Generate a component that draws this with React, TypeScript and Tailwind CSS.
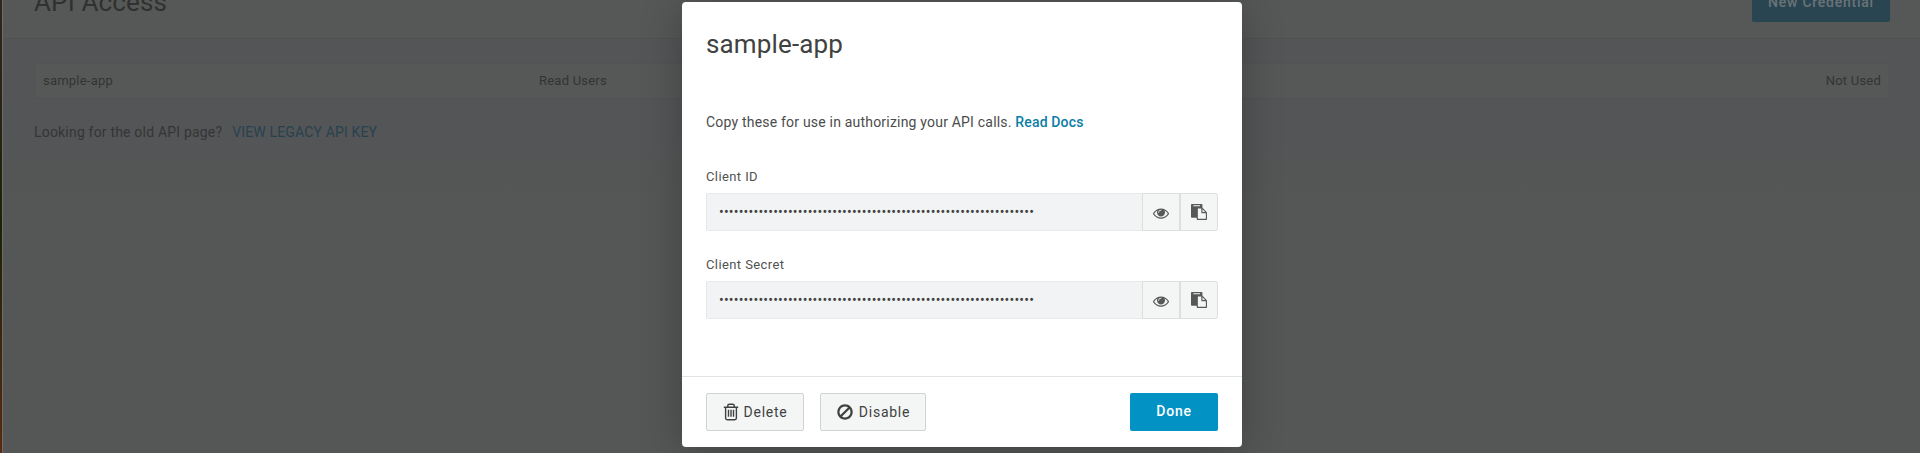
import React from "react";

function Icon({ path, className }: { path: string; className: string }) {
  return (
    <svg viewBox="0 0 1792 1792" fill="currentColor" className={className}>
      <path d={path} />
    </svg>
  );
}

const EYE =
  "M1664 960q-152-236-381-353 61 104 61 225 0 185-131.5 316.5t-316.5 131.5-316.5-131.5-131.5-316.5q0-121 61-225-229 117-381 353 133 205 333.5 326.5t434.5 121.5 434.5-121.5 333.5-326.5zm-720-384q0-20-14-34t-34-14q-125 0-214.5 89.5t-89.5 214.5q0 20 14 34t34 14 34-14 14-34q0-86 61-147t147-61q20 0 34-14t14-34zm848 384q0 34-20 69-140 230-376.5 368.5t-499.5 138.5-499.5-139-376.5-368q-20-35-20-69t20-69q140-229 376.5-368t499.5-139 499.5 139 376.5 368q20 35 20 69z";
const PASTE =
  "M768 1664h896v-640h-416q-40 0-68-28t-28-68v-416h-384v1152zm256-1440v-64q0-13-9.5-22.5t-22.5-9.5h-704q-13 0-22.5 9.5t-9.5 22.5v64q0 13 9.5 22.5t22.5 9.5h704q13 0 22.5-9.5t9.5-22.5zm256 672h299l-299-299v299zm512 128v672q0 40-28 68t-68 28h-960q-40 0-68-28t-28-68v-160h-544q-40 0-68-28t-28-68v-1344q0-40 28-68t68-28h1088q40 0 68 28t28 68v328q21 13 36 28l408 408q28 28 48 76t20 88z";
const BAN =
  "M1440 893q0-161-87-295l-754 753q137 89 297 89 111 0 211.5-43.5t173.5-116.5 116-174.5 43-212.5zm-999 299l755-754q-135-91-300-91-148 0-273 73t-198 199-73 274q0 162 89 299zm1223-299q0 157-61 300t-163.5 246-245 164-298.5 61-298.5-61-245-164-163.5-246-61-300 61-299.5 163.5-245.5 245-164 298.5-61 298.5 61 245 164 163.5 245.5 61 299.5z";

function Trash() {
  return (
    <svg viewBox="0 0 16 18" className="h-[18px] w-4" fill="none" stroke="currentColor" strokeWidth="1.4">
      <path d="M0.8 4.2h14.4M4.8 4V2.6q0-1.4 1.4-1.4h3.6q1.4 0 1.4 1.4V4M2.6 4.2v10.9q0 1.6 1.6 1.6h7.6q1.6 0 1.6-1.6V4.2M5.5 6.8v7M8 6.8v7M10.5 6.8v7" />
    </svg>
  );
}

const MASK = "•".repeat(64);

function SecretField({ label }: { label: string }) {
  return (
    <div>
      <div className="mb-[7px] text-[13px] leading-[18px] tracking-[0.4px] text-[#505251]">{label}</div>
      <div className="flex h-[38px]">
        <div className="flex flex-1 items-center overflow-hidden rounded-l-[2px] border border-r-0 border-[#e8eaea] bg-[#f2f3f5] pl-3 text-sm leading-4 tracking-[0.2px] text-[#404241]">
          {MASK}
        </div>
        <button className="flex w-[38px] items-center justify-center border border-[#dcdfde] bg-[#f4f6f5] pt-0.5 text-[#555857]">
          <Icon path={EYE} className="size-4" />
        </button>
        <button className="flex w-[38px] items-center justify-center rounded-r-[2px] border border-[#dcdfde] bg-[#f4f6f5] text-[#555857]">
          <Icon path={PASTE} className="size-4" />
        </button>
      </div>
    </div>
  );
}

function Page() {
  return (
    <div className="flex h-full">
      <div className="w-[2px] bg-linear-to-b from-[#33251c] via-[#1c2206] via-50% to-[#5a2a10]" />
      <div className="flex flex-1 flex-col border-l border-[#6c6e6d] bg-linear-to-b from-[#545557] from-30% to-[#545755] to-45%">
        <header className="flex h-[39px] items-start justify-between border-b border-[#505154] bg-[#565857] pr-[30px] pl-[31px]">
          <h1 className="-mt-[14px] text-[26px] leading-8 tracking-[0.15px] text-[#2f3130]">API Access</h1>
          <button className="-mt-4 h-[38px] w-[138px] rounded-[2px] bg-[#294552] pb-0.5 text-sm font-medium tracking-[0.75px] text-[#6b7476]">
            New Credential
          </button>
        </header>
        <div className="pr-[30px] pl-[31px]">
          <div className="mt-6 flex h-9 items-center border border-[#525355] bg-[#565857] px-2 text-[13px] tracking-[0.22px] text-[#323433]">
            <span className="w-[496px]">sample-app</span>
            <span className="flex-1">Read Users</span>
            <span>Not Used</span>
          </div>
          <p className="mt-[23px] text-sm leading-5 tracking-[0.19px] text-[#343635]">
            Looking for the old API page?
            <a className="ml-[10px] tracking-[0.15px] text-[#27424f]">VIEW LEGACY API KEY</a>
          </p>
        </div>
      </div>
    </div>
  );
}

const BUTTON = "flex h-[38px] items-center justify-center rounded-[2px] text-sm";

function Modal() {
  return (
    <div className="flex h-[445px] w-[560px] flex-col rounded-[4px] bg-white shadow-[0_4px_40px_rgba(0,0,0,0.25)]">
      <div className="flex-1 px-6">
        <h2 className="mt-[24px] text-[26px] leading-9 tracking-[0.15px] text-[#404241]">sample-app</h2>
        <p className="mt-[50px] text-sm leading-5 tracking-[0.2px] text-[#4a4c4b]">
          Copy these for use in authorizing your API calls.{" "}
          <a className="font-medium tracking-[0.15px] text-[#0b7ea6]">Read Docs</a>
        </p>
        <div className="mt-9 flex flex-col gap-[25px]">
          <SecretField label="Client ID" />
          <SecretField label="Client Secret" />
        </div>
      </div>
      <footer className="flex h-[71px] gap-4 border-t border-[#e2e3e3] px-6 pt-4">
        <button className={`${BUTTON} w-[98px] gap-[5px] border border-[#d0d3d2] bg-[#f4f6f5] tracking-[0.75px] text-[#404241]`}>
          <Trash />
          Delete
        </button>
        <button className={`${BUTTON} w-[106px] gap-[5px] border border-[#d0d3d2] bg-[#f4f6f5] tracking-[0.75px] text-[#404241]`}>
          <Icon path={BAN} className="size-[18px]" />
          Disable
        </button>
        <button className={`${BUTTON} ml-auto w-[88px] bg-[#0292c4] pb-0.5 font-medium tracking-[0.8px] text-white`}>
          Done
        </button>
      </footer>
    </div>
  );
}

export default function App() {
  return (
    <div className="relative h-[453px] w-[1920px] overflow-hidden font-['Roboto',sans-serif]">
      <Page />
      <div className="absolute inset-0 flex items-start pt-[2px] pl-[682px]">
        <Modal />
      </div>
    </div>
  );
}
